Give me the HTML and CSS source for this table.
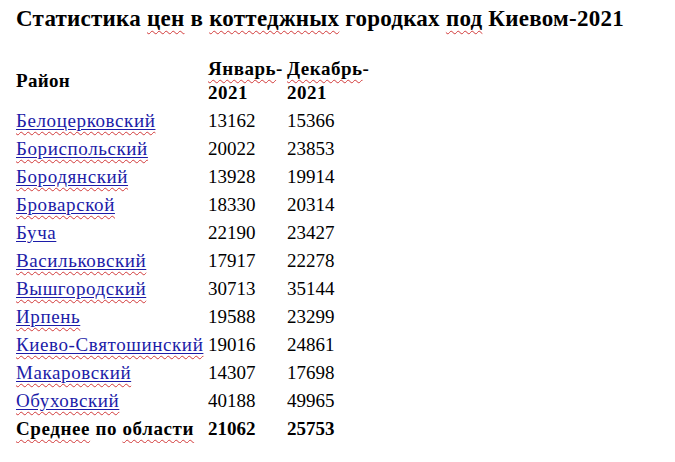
FILE: index.html
```html
<!DOCTYPE html>
<html lang="ru">
<head>
<meta charset="utf-8">
<title>Статистика цен</title>
<link rel="stylesheet" href="styles.css">
</head>
<body>
<div class="doc">
  <h1 class="title">Статистика <span class="sp">цен</span> в <span class="sp">коттеджных</span> городках <span class="sp">под</span> Киевом-2021</h1>
  <table class="stats">
    <colgroup><col class="c1"><col class="c2"><col class="c3"></colgroup>
    <thead>
      <tr><th class="mid">Район</th><th class="wide"><span class="sp">Январь</span>-<br>2021</th><th class="wide"><span class="sp">Декабрь</span>-<br>2021</th></tr>
    </thead>
    <tbody>
      <tr><td class="name"><a href="#"><span class="sp">Белоцерковский</span></a></td><td>13162</td><td>15366</td></tr>
      <tr><td class="name"><a href="#"><span class="sp">Бориспольский</span></a></td><td>20022</td><td>23853</td></tr>
      <tr><td class="name"><a href="#"><span class="sp">Бородянский</span></a></td><td>13928</td><td>19914</td></tr>
      <tr><td class="name"><a href="#"><span class="sp">Броварской</span></a></td><td>18330</td><td>20314</td></tr>
      <tr><td class="name"><a href="#">Буча</a></td><td>22190</td><td>23427</td></tr>
      <tr><td class="name"><a href="#"><span class="sp">Васильковский</span></a></td><td>17917</td><td>22278</td></tr>
      <tr><td class="name"><a href="#"><span class="sp">Вышгородский</span></a></td><td>30713</td><td>35144</td></tr>
      <tr><td class="name"><a href="#"><span class="sp">Ирпень</span></a></td><td>19588</td><td>23299</td></tr>
      <tr><td class="name"><a href="#"><span class="sp">Киево-Святошинский</span></a></td><td>19016</td><td>24861</td></tr>
      <tr><td class="name"><a href="#"><span class="sp">Макаровский</span></a></td><td>14307</td><td>17698</td></tr>
      <tr><td class="name"><a href="#"><span class="sp">Обуховский</span></a></td><td>40188</td><td>49965</td></tr>
      <tr class="total"><td class="name"><span class="sp">Среднее</span> по <span class="sp">области</span></td><td>21062</td><td>25753</td></tr>
    </tbody>
  </table>
</div>
</body>
</html>
```
FILE: styles.css
```css
html, body {
  margin: 0;
  padding: 0;
  background: #ffffff;
}
body {
  font-family: "Liberation Serif", "Times New Roman", serif;
  color: #000000;
}
.doc {
  padding: 6px 0 0 14px;
}
.title {
  margin: 0 0 0 2px;
  font-size: 23px;
  letter-spacing: 0.25px;
  font-weight: bold;
  line-height: 26px;
}
.sp {
  text-decoration-line: underline;
  text-decoration-style: wavy;
  text-decoration-color: #d23a3a;
  text-decoration-thickness: 1px;
  text-underline-offset: 4px;
}
.stats {
  margin-top: 23px;
  border-collapse: collapse;
  table-layout: fixed;
  font-size: 19px;
  line-height: 24px;
}
.c1 { width: 192px; }
.c2 { width: 79px; }
.c3 { width: 86px; }
.stats th,
.stats td {
  padding: 2px 2px;
  text-align: left;
  vertical-align: top;
  white-space: nowrap;
}
.stats th {
  font-weight: bold;
}
.stats th.mid {
  vertical-align: middle;
  letter-spacing: 0.3px;
}
.stats th.wide {
  letter-spacing: 0.5px;
}
.stats td.name {
  letter-spacing: 0.6px;
}
.stats a {
  color: #1c1ca8;
  text-decoration: underline;
  text-decoration-color: #1c1ca8;
  text-underline-offset: 2px;
}
.total td {
  font-weight: bold;
}
```
